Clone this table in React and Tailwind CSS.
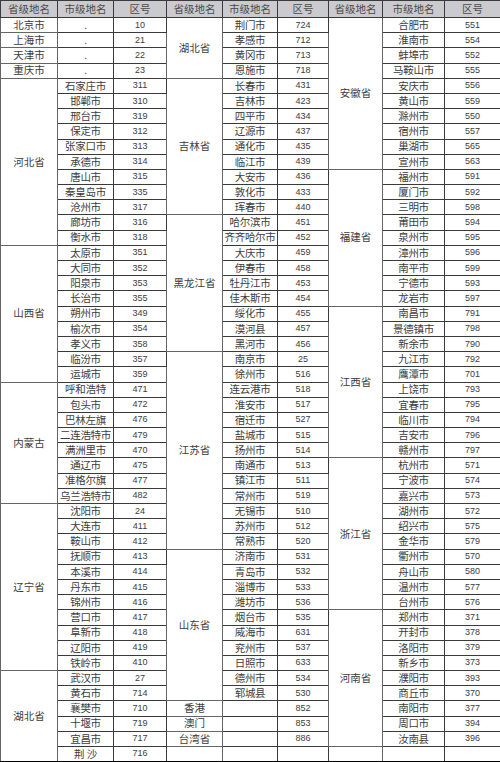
import React from "react";

const groups = [
  [
    ["北京市", [[".", "10"]]],
    ["上海市", [[".", "21"]]],
    ["天津市", [[".", "22"]]],
    ["重庆市", [[".", "23"]]],
    ["河北省", [["石家庄市", "311"], ["邯郸市", "310"], ["邢台市", "319"], ["保定市", "312"], ["张家口市", "313"], ["承德市", "314"], ["唐山市", "315"], ["秦皇岛市", "335"], ["沧州市", "317"], ["廊坊市", "316"], ["衡水市", "318"]]],
    ["山西省", [["太原市", "351"], ["大同市", "352"], ["阳泉市", "353"], ["长治市", "355"], ["朔州市", "349"], ["榆次市", "354"], ["孝义市", "358"], ["临汾市", "357"], ["运城市", "359"]]],
    ["内蒙古", [["呼和浩特", "471"], ["包头市", "472"], ["巴林左旗", "476"], ["二连浩特市", "479"], ["满洲里市", "470"], ["通辽市", "475"], ["准格尔旗", "477"], ["乌兰浩特市", "482"]]],
    ["辽宁省", [["沈阳市", "24"], ["大连市", "411"], ["鞍山市", "412"], ["抚顺市", "413"], ["本溪市", "414"], ["丹东市", "415"], ["锦州市", "416"], ["营口市", "417"], ["阜新市", "418"], ["辽阳市", "419"], ["铁岭市", "410"]]],
    ["湖北省", [["武汉市", "27"], ["黄石市", "714"], ["襄樊市", "710"], ["十堰市", "719"], ["宜昌市", "717"], ["荆 沙", "716"]]],
  ],
  [
    ["湖北省", [["荆门市", "724"], ["孝感市", "712"], ["黄冈市", "713"], ["恩施市", "718"]]],
    ["吉林省", [["长春市", "431"], ["吉林市", "423"], ["四平市", "434"], ["辽源市", "437"], ["通化市", "435"], ["临江市", "439"], ["大安市", "436"], ["敦化市", "433"], ["珲春市", "440"]]],
    ["黑龙江省", [["哈尔滨市", "451"], ["齐齐哈尔市", "452"], ["大庆市", "459"], ["伊春市", "458"], ["牡丹江市", "453"], ["佳木斯市", "454"], ["绥化市", "455"], ["漠河县", "457"], ["黑河市", "456"]]],
    ["江苏省", [["南京市", "25"], ["徐州市", "516"], ["连云港市", "518"], ["淮安市", "517"], ["宿迁市", "527"], ["盐城市", "515"], ["扬州市", "514"], ["南通市", "513"], ["镇江市", "511"], ["常州市", "519"], ["无锡市", "510"], ["苏州市", "512"], ["常熟市", "520"]]],
    ["山东省", [["济南市", "531"], ["青岛市", "532"], ["淄博市", "533"], ["潍坊市", "536"], ["烟台市", "535"], ["威海市", "631"], ["兖州市", "537"], ["日照市", "633"], ["德州市", "534"], ["郓城县", "530"]]],
    ["香港", [["", "852"]]],
    ["澳门", [["", "853"]]],
    ["台湾省", [["", "886"]]],
    ["", [["", ""]]],
  ],
  [
    ["安徽省", [["合肥市", "551"], ["淮南市", "554"], ["蚌埠市", "552"], ["马鞍山市", "555"], ["安庆市", "556"], ["黄山市", "559"], ["滁州市", "550"], ["宿州市", "557"], ["巢湖市", "565"], ["宣州市", "563"]]],
    ["福建省", [["福州市", "591"], ["厦门市", "592"], ["三明市", "598"], ["莆田市", "594"], ["泉州市", "595"], ["漳州市", "596"], ["南平市", "599"], ["宁德市", "593"], ["龙岩市", "597"]]],
    ["江西省", [["南昌市", "791"], ["景德镇市", "798"], ["新余市", "790"], ["九江市", "792"], ["鹰潭市", "701"], ["上饶市", "793"], ["宜春市", "795"], ["临川市", "794"], ["吉安市", "796"], ["赣州市", "797"]]],
    ["浙江省", [["杭州市", "571"], ["宁波市", "574"], ["嘉兴市", "573"], ["湖州市", "572"], ["绍兴市", "575"], ["金华市", "579"], ["衢州市", "570"], ["舟山市", "580"], ["温州市", "577"], ["台州市", "576"]]],
    ["河南省", [["郑州市", "371"], ["开封市", "378"], ["洛阳市", "379"], ["新乡市", "373"], ["濮阳市", "393"], ["商丘市", "370"], ["南阳市", "377"], ["周口市", "394"], ["汝南县", "396"]]],
    ["", [["", ""]]],
  ],
];

// flatten every group into 49 rows: [provinceCell | null, city, code]
function toRows(group) {
  const rows = [];
  group.forEach(([prov, cities]) => {
    cities.forEach(([city, code], i) => {
      rows.push({ prov: i === 0 ? { name: prov, span: cities.length } : null, city, code });
    });
  });
  return rows;
}

const tables = groups.map(toRows);
const rowCount = tables[0].length;

const cell = "border border-[#3a3a3a] p-0 text-center align-middle leading-none whitespace-nowrap overflow-hidden";
const widths = ["w-[57px]", "w-[56px]", "w-[53px]", "w-[56px]", "w-[55px]", "w-[51px]", "w-[54px]", "w-[62px]", "w-[56px]"];

export default function App() {
  return (
    <div className="w-[500px] h-[762px] bg-white overflow-hidden">
      <table className="w-[500px] table-fixed border-collapse border-b-2 border-b-black font-['Liberation_Sans','Noto_Sans_CJK_SC',sans-serif] text-[#3c3c3c]">
        <colgroup>
          {widths.map((w, i) => (
            <col key={i} className={w} />
          ))}
        </colgroup>
        <thead>
          <tr className="h-[17px] bg-[#cbcacf]">
            {[0, 1, 2].map((g) => (
              <React.Fragment key={g}>
                <th className={`${cell} font-normal text-[10.5px] text-[#4a4a4a]`}>省级地名</th>
                <th className={`${cell} font-normal text-[10.5px] text-[#4a4a4a]`}>市级地名</th>
                <th className={`${cell} font-normal text-[10.5px] text-[#4a4a4a]`}>区号</th>
              </React.Fragment>
            ))}
          </tr>
        </thead>
        <tbody>
          {Array.from({ length: rowCount }).map((_, r) => (
            <tr key={r} className="h-[15.2px]">
              {tables.map((t, g) => {
                const row = t[r];
                return (
                  <React.Fragment key={g}>
                    {row.prov && (
                      <td rowSpan={row.prov.span} className={`${cell} border-[#666] text-[10.5px]`}>
                        {row.prov.name}
                      </td>
                    )}
                    <td className={`${cell} text-[10.5px] tracking-[-0.3px]`}>{row.city}</td>
                    <td className={`${cell} text-[9px]`}>{row.code}</td>
                  </React.Fragment>
                );
              })}
            </tr>
          ))}
        </tbody>
      </table>
    </div>
  );
}
